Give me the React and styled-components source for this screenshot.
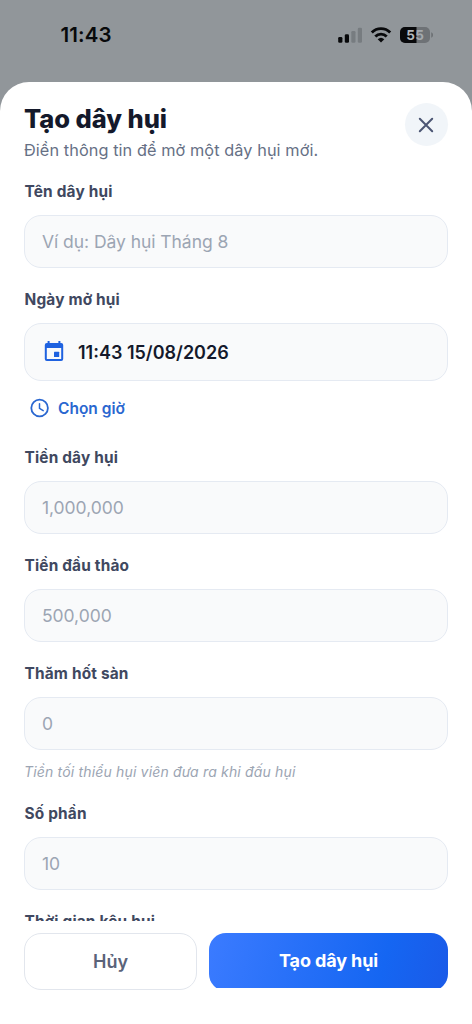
import React from "react";
import styled, { createGlobalStyle } from "styled-components";

const Global = createGlobalStyle`
  * { box-sizing: border-box; }
  body { margin: 0; background: #91969a; font-family: Inter, "Noto Sans", sans-serif; }
`;

const Screen = styled.div`
  width: 472px;
  height: 1024px;
  display: flex;
  flex-direction: column;
  overflow: hidden;
  background: #91969a;
`;

const StatusBar = styled.div`
  height: 82px;
  flex: none;
  display: flex;
  align-items: flex-start;
  justify-content: space-between;
  padding: 23px 39px 0 60.5px;
`;

const Clock = styled.span`
  font-size: 20.5px;
  line-height: 24px;
  font-weight: 600;
  letter-spacing: 0.1px;
  color: #08090b;
`;

const StatusIcons = styled.svg`
  display: block;
  width: 96px;
  height: 24px;
`;

const Sheet = styled.div`
  flex: 1;
  min-height: 0;
  display: flex;
  flex-direction: column;
  background: #fff;
  border-radius: 29px 29px 0 0;
  padding: 21px 24px 0;
`;

const Header = styled.div`
  flex: none;
  height: 79px;
  display: flex;
  justify-content: space-between;
`;

const Title = styled.h1`
  margin: 0;
  font-size: 25.5px;
  line-height: 32px;
  font-weight: 800;
  letter-spacing: -0.05px;
  color: #14192b;
`;

const Subtitle = styled.p`
  margin: 0;
  font-size: 16.3px;
  line-height: 30px;
  letter-spacing: 0.08px;
  color: #667085;
`;

const CloseButton = styled.button`
  width: 43px;
  height: 43px;
  border: 0;
  padding: 0 1px 0 0;
  border-radius: 50%;
  background: #f1f5f9;
  color: #4c5674;
  display: grid;
  place-items: center;
`;

const Form = styled.div`
  height: 739px;
  flex: none;
  overflow: hidden;
  display: flex;
  flex-direction: column;
  gap: 22px;
`;

const Field = styled.div`
  flex: none;
  display: flex;
  flex-direction: column;
`;

const Label = styled.label`
  font-size: 15.4px;
  line-height: 20px;
  font-weight: 700;
  letter-spacing: 0.18px;
  color: #404860;
  margin-bottom: 13px;
  padding-left: 0.5px;
  white-space: nowrap;
`;

const Input = styled.input`
  height: 53px;
  width: 100%;
  border: 1.5px solid #e5eaf2;
  border-radius: 17px;
  background: #f9fafb;
  padding: 0 17px;
  font: 400 17.5px Inter, "Noto Sans", sans-serif;
  letter-spacing: -0.05px;
  outline: none;
  &::placeholder { color: #9ca5b3; opacity: 1; }
`;

const DateBox = styled.div`
  height: 58px;
  border: 1.5px solid #e5eaf2;
  border-radius: 17px;
  background: #f9fafb;
  display: flex;
  align-items: center;
  gap: 12px;
  padding: 0 17px;
  font-size: 18px;
  font-weight: 600;
  color: #14192b;
  svg { color: #1f62e0; }
`;

const TimeLink = styled.div`
  margin: 17px 0 8px 6px;
  height: 20px;
  display: flex;
  align-items: center;
  gap: 8px;
  font-size: 15.5px;
  font-weight: 600;
  color: #2a67d0;
`;

const Hint = styled.p`
  margin: 12px 0 0;
  font-size: 14px;
  line-height: 20px;
  font-style: italic;
  letter-spacing: 0.17px;
  color: #9ca5b3;
`;

const Footer = styled.div`
  flex: none;
  margin-top: 12px;
  display: flex;
  gap: 12px;
`;

const CancelButton = styled.button`
  width: 173px;
  height: 57px;
  border: 1.5px solid #e2e6ed;
  border-radius: 17px;
  background: #fff;
  color: #5a637a;
  font: 600 18px Inter, "Noto Sans", sans-serif;
  padding: 0;
`;

const SubmitClip = styled.div`
  flex: 1;
  height: 55px;
  overflow: hidden;
`;

const SubmitButton = styled.button`
  width: 100%;
  height: 58px;
  border: 0;
  border-radius: 17px;
  padding: 0 0 3px;
  background: linear-gradient(105deg, #3b7bff 0%, #1566f2 72%, #1a5ae8 100%);
  color: #fff;
  font: 700 18px Inter, "Noto Sans", sans-serif;
  letter-spacing: -0.12px;
`;

function StatusGlyphs() {
  return (
    <StatusIcons viewBox="337 23 96 24">
      <rect x="338.2" y="37" width="4.2" height="5.8" rx="1.3" fill="#08090b" />
      <rect x="344.8" y="34.3" width="4.2" height="8.5" rx="1.3" fill="#08090b" />
      <rect x="351.3" y="31" width="4.2" height="11.8" rx="1.3" fill="#777c80" />
      <rect x="357.8" y="27.8" width="4.2" height="15" rx="1.3" fill="#777c80" />
      <g fill="none" stroke="#08090b" strokeWidth="2.9">
        <path d="M371.8 32.4a13 13 0 0 1 18.4 0" />
        <path d="M375.3 36.5a8 8 0 0 1 11.4 0" />
      </g>
      <path d="M377.7 39.2a4.8 4.8 0 0 1 6.6 0L381 42.6z" fill="#08090b" />
      <rect x="400" y="27" width="30" height="16" rx="5" fill="#6e7276" />
      <path d="M405 27h11.5v16H405a5 5 0 0 1-5-5v-6a5 5 0 0 1 5-5z" fill="#08090b" />
      <path d="M431.2 32.3q2 .8 2 2.7t-2 2.7z" fill="#6e7276" />
      <text x="406.2" y="40" fontSize="13.5" fontWeight="700" fill="#b4b9bd" fontFamily="Inter, sans-serif">5</text>
      <text x="415.2" y="40" fontSize="13.5" fontWeight="700" fill="#a4a9ad" fontFamily="Inter, sans-serif">5</text>
    </StatusIcons>
  );
}

function CalendarIcon() {
  return (
    <svg width="24" height="24" viewBox="0 0 24 24" fill="currentColor">
      <path fillRule="evenodd" d="M5.6 1h2v2h8.800v-2h2v2h.8a2 2 0 0 1 2 2v14a2 2 0 0 1-2 2H4.800a2 2 0 0 1-2-2v-14a2 2 0 0 1 2-2h.8zM4.800 8v11h14.400v-11z" />
      <rect x="12" y="11.700" width="5.200" height="5.200" rx="0.500" />
    </svg>
  );
}

function ClockIcon() {
  return (
    <svg width="20" height="20" viewBox="0 0 20 20" fill="none" stroke="currentColor" strokeWidth="1.800" strokeLinecap="round">
      <circle cx="9.600" cy="10" r="8.300" />
      <path d="M9.500 5.800v4.600l3.700 2.200" strokeWidth="1.500" />
    </svg>
  );
}

function TextField({ label, placeholder, hint }) {
  return (
    <Field>
      <Label>{label}</Label>
      <Input placeholder={placeholder} />
      {hint && <Hint>{hint}</Hint>}
    </Field>
  );
}

export default function App() {
  return (
    <Screen>
      <Global />
      <StatusBar>
        <Clock>11:43</Clock>
        <StatusGlyphs />
      </StatusBar>
      <Sheet>
        <Header>
          <div>
            <Title>Tạo dây hụi</Title>
            <Subtitle>Điền thông tin để mở một dây hụi mới.</Subtitle>
          </div>
          <CloseButton aria-label="Đóng">
            <svg width="16" height="16" viewBox="0 0 16 16" fill="none" stroke="currentColor" strokeWidth="2" strokeLinecap="round">
              <path d="M1.800 1.800l12.400 12.400M14.200 1.800l-12.400 12.400" />
            </svg>
          </CloseButton>
        </Header>
        <Form>
          <TextField label="Tên dây hụi" placeholder="Ví dụ: Dây hụi Tháng 8" />
          <Field>
            <Label>Ngày mở hụi</Label>
            <DateBox>
              <CalendarIcon />
              11:43 15/08/2026
            </DateBox>
            <TimeLink>
              <ClockIcon />
              Chọn giờ
            </TimeLink>
          </Field>
          <TextField label="Tiền dây hụi" placeholder="1,000,000" />
          <TextField label="Tiền đầu thảo" placeholder="500,000" />
          <TextField label="Thăm hốt sàn" placeholder="0" hint="Tiền tối thiểu hụi viên đưa ra khi đấu hụi" />
          <TextField label="Số phần" placeholder="10" />
          <TextField label="Thời gian kêu hụi" placeholder="" />
        </Form>
        <Footer>
          <CancelButton>Hủy</CancelButton>
          <SubmitClip>
            <SubmitButton>Tạo dây hụi</SubmitButton>
          </SubmitClip>
        </Footer>
      </Sheet>
    </Screen>
  );
}
